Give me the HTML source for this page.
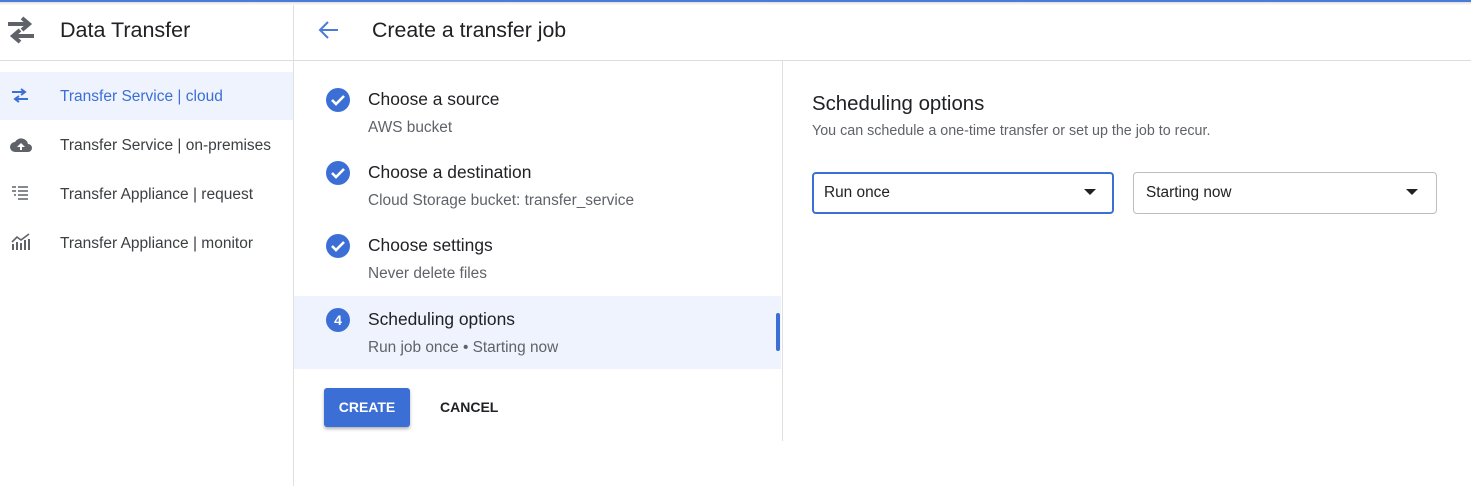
<!DOCTYPE html>
<html><head><style>
*{margin:0;padding:0;box-sizing:border-box}
body{width:1471px;height:486px;background:#fff;font-family:"Liberation Sans",sans-serif;color:#202124;position:relative;overflow:hidden}
.a{position:absolute}
.t{white-space:nowrap}
</style></head><body>
<div class="a" style="left:0;top:0;width:1471px;height:2px;background:#4a7bd8"></div>
<div class="a" style="left:0;top:2px;width:1471px;height:3px;background:linear-gradient(#ddd,#fff)"></div>
<div class="a" style="left:0;top:60px;width:1471px;height:1px;background:#dadce0"></div>
<div class="a" style="left:293px;top:5px;width:1px;height:481px;background:#e0e0e0"></div>
<!-- header -->
<svg class="a" style="left:6px;top:15px" width="30" height="30" viewBox="0 0 30 30"><path d="M2 9h19M16 3l7 6-7 6" stroke="#5f6368" stroke-width="4" fill="none"/><path d="M28 21H9M14 15l-7 6 7 6" stroke="#5f6368" stroke-width="4" fill="none"/></svg>
<div class="a t" style="left:60px;top:18px;font-size:21.5px">Data Transfer</div>
<svg class="a" style="left:318px;top:20px" width="22" height="20" viewBox="0 0 22 20"><path d="M20 10H3M10 2L2 10l8 8" stroke="#4a7bd8" stroke-width="2" fill="none"/></svg>
<div class="a t" style="left:372px;top:18px;font-size:21.3px">Create a transfer job</div>
<!-- sidebar -->
<div class="a" style="left:0;top:72px;width:293px;height:48px;background:#eef3fd"></div>
<svg class="a" style="left:11px;top:88px" width="18" height="15" viewBox="0 0 18 15"><path d="M1 4h12M10 1l4 3-4 3M17 11H5M8 8l-4 3 4 3" stroke="#3b6fd6" stroke-width="2" fill="none"/></svg>
<div class="a t" style="left:60px;top:88px;font-size:15.5px;color:#3b6fd6">Transfer Service | cloud</div>
<svg class="a" style="left:9px;top:137px" width="24" height="16" viewBox="0 0 24 16"><path d="M6 15a5 5 0 0 1 0-10 7 7 0 0 1 13 2 4 4 0 0 1 0 8z" fill="#5f6368"/><path d="M12 6l-4 4h3v3h2v-3h3z" fill="#fff"/></svg>
<div class="a t" style="left:60px;top:137px;font-size:15.5px;color:#3c4043">Transfer Service | on-premises</div>
<svg class="a" style="left:11px;top:186px" width="18" height="14" viewBox="0 0 18 14"><path d="M7 1h10M7 5h10M7 9h10M7 13h10M1 5h4M3 9h2M1 1h4" stroke="#5f6368" stroke-width="1.6"/></svg>
<div class="a t" style="left:60px;top:186px;font-size:15.5px;color:#3c4043">Transfer Appliance | request</div>
<svg class="a" style="left:11px;top:233px" width="20" height="17" viewBox="0 0 20 17"><path d="M2 17V11M6 17V9M10 17V10M14 17V7M18 17V6" stroke="#5f6368" stroke-width="2"/><path d="M1 9l5-5 4 3 8-6" stroke="#5f6368" stroke-width="1.6" fill="none"/></svg>
<div class="a t" style="left:60px;top:235px;font-size:15.5px;color:#3c4043">Transfer Appliance | monitor</div>
<!-- middle -->
<div class="a" style="left:782px;top:61px;width:1px;height:380px;background:#e0e0e0"></div>
<div class="a" style="left:294px;top:296px;width:487px;height:73px;background:#eef3fd"></div>
<div class="a" style="left:776px;top:313px;width:4px;height:38px;background:#3b6fd6;border-radius:2px"></div>
<svg class="a" style="left:325px;top:87px" width="26" height="26" viewBox="0 0 26 26"><circle cx="13" cy="13" r="12" fill="#3b6fd6"/><path d="M7 13l4 4 8-8" stroke="#fff" stroke-width="2.6" fill="none"/></svg>
<svg class="a" style="left:325px;top:160px" width="26" height="26" viewBox="0 0 26 26"><circle cx="13" cy="13" r="12" fill="#3b6fd6"/><path d="M7 13l4 4 8-8" stroke="#fff" stroke-width="2.6" fill="none"/></svg>
<svg class="a" style="left:325px;top:233px" width="26" height="26" viewBox="0 0 26 26"><circle cx="13" cy="13" r="12" fill="#3b6fd6"/><path d="M7 13l4 4 8-8" stroke="#fff" stroke-width="2.6" fill="none"/></svg>
<div class="a" style="left:326px;top:308px;width:24px;height:24px;border-radius:50%;background:#3b6fd6;color:#fff;font-size:14px;font-weight:bold;text-align:center;line-height:24px">4</div>
<div class="a t" style="left:368px;top:89px;font-size:17.4px">Choose a source</div>
<div class="a t" style="left:368px;top:119px;font-size:15.4px;color:#5f6368">AWS bucket</div>
<div class="a t" style="left:368px;top:162px;font-size:17.4px">Choose a destination</div>
<div class="a t" style="left:368px;top:192px;font-size:15.4px;color:#5f6368">Cloud Storage bucket: transfer_service</div>
<div class="a t" style="left:368px;top:235px;font-size:17.4px">Choose settings</div>
<div class="a t" style="left:368px;top:265px;font-size:15.4px;color:#5f6368">Never delete files</div>
<div class="a t" style="left:368px;top:309px;font-size:17.4px">Scheduling options</div>
<div class="a t" style="left:368px;top:339px;font-size:15.4px;color:#5f6368">Run job once • Starting now</div>
<div class="a" style="left:324px;top:388px;width:86px;height:39px;background:#3b6fd6;border-radius:3px;box-shadow:0 2px 3px rgba(0,0,0,.3);color:#fff;font-size:14px;font-weight:bold;text-align:center;line-height:39px">CREATE</div>
<div class="a t" style="left:440px;top:399px;font-size:14px;font-weight:bold;color:#202124">CANCEL</div>
<!-- right -->
<div class="a t" style="left:812px;top:93px;font-size:20.4px">Scheduling options</div>
<div class="a t" style="left:812px;top:123px;font-size:14.3px;color:#5f6368">You can schedule a one-time transfer or set up the job to recur.</div>
<div class="a" style="left:812px;top:172px;width:302px;height:42px;border:2px solid #3b6fd6;border-radius:4px"></div>
<div class="a t" style="left:824px;top:184px;font-size:15.4px">Run once</div>
<div class="a" style="left:1084px;top:189px;border-left:6px solid transparent;border-right:6px solid transparent;border-top:6px solid #202124"></div>
<div class="a" style="left:1133px;top:172px;width:304px;height:42px;border:1px solid #bdbdbd;border-radius:4px"></div>
<div class="a t" style="left:1146px;top:184px;font-size:15.4px">Starting now</div>
<div class="a" style="left:1406px;top:189px;border-left:6px solid transparent;border-right:6px solid transparent;border-top:6px solid #202124"></div>
</body></html>
